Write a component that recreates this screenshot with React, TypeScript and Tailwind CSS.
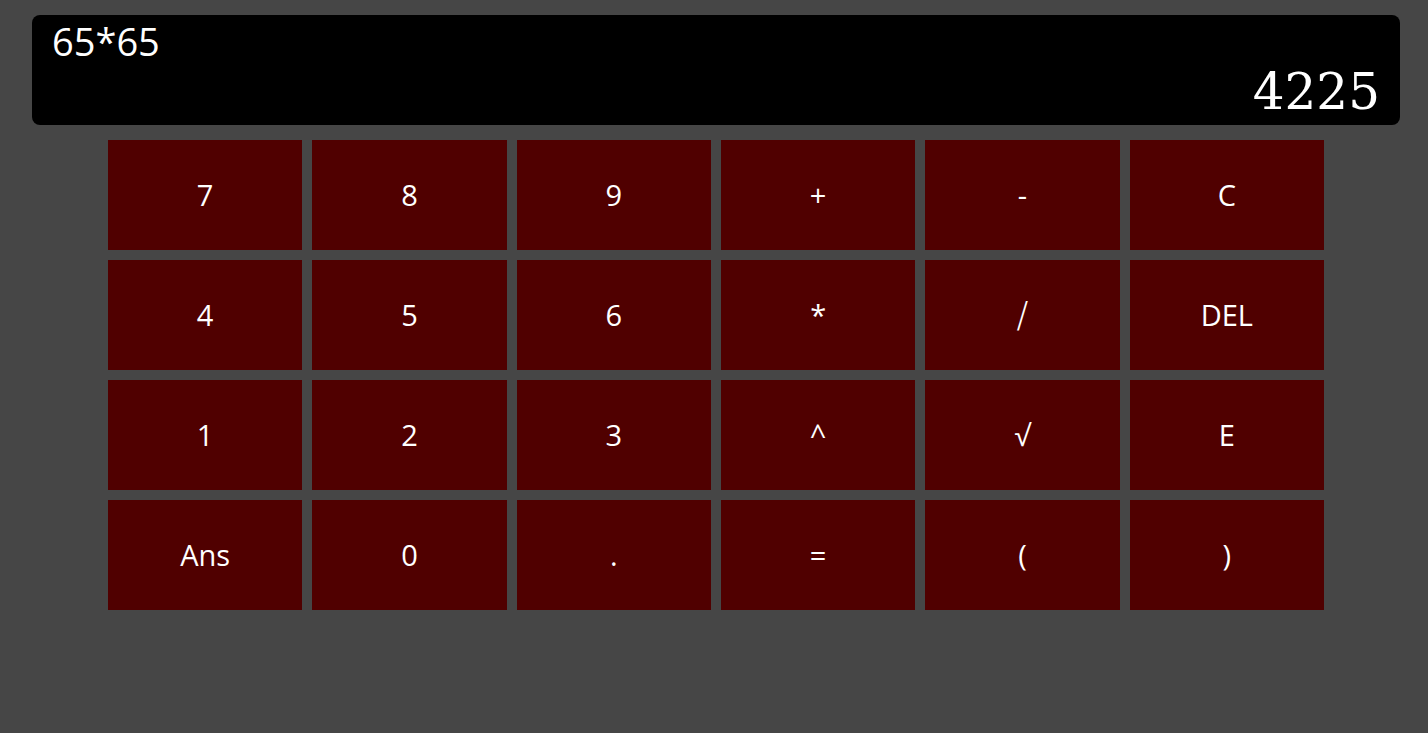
import React from "react";

const keys = [
  "7", "8", "9", "+", "-", "C",
  "4", "5", "6", "*", "/", "DEL",
  "1", "2", "3", "^", "√", "E",
  "Ans", "0", ".", "=", "(", ")",
];

export default function App() {
  return (
    <div className="min-h-[733px] w-full bg-[#464646] pt-[15px] font-['Open_Sans',sans-serif]">
      <div className="ml-[32px] flex h-[110px] w-[1368px] flex-col rounded-[8px] bg-black px-[20px] text-white">
        <div className="text-[38px] leading-[53px]">65*65</div>
        <div className="text-right font-['DejaVu_Serif',serif] text-[50px] leading-[49px]">4225</div>
      </div>
      <div className="ml-[108px] mt-[15px] grid w-[1216px] grid-cols-6 gap-[10px]">
        {keys.map((k) => (
          <button
            key={k}
            className="flex h-[110px] items-center justify-center bg-[#500000] text-[29px] text-white"
          >
            {k === "/" ? (
              <span className="font-['DejaVu_Sans',sans-serif] text-[35px] font-light">/</span>
            ) : (
              k
            )}
          </button>
        ))}
      </div>
    </div>
  );
}
